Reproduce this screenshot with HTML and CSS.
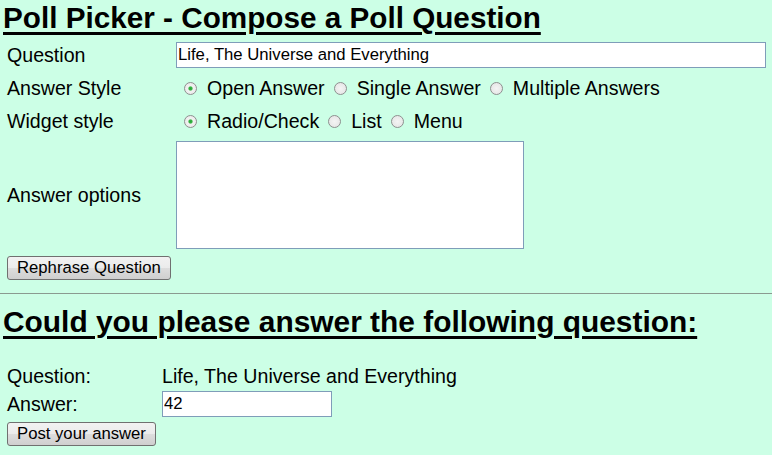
FILE: index.html
```html
<!DOCTYPE html>
<html>
<head>
<meta charset="utf-8">
<title>Poll Picker</title>
<link rel="stylesheet" href="styles.css">
</head>
<body>
<h1 class="title">Poll Picker - Compose a Poll Question</h1>
<form class="compose">
  <div class="label">Question</div>
  <div class="field"><input class="text-in" type="text" value="Life, The Universe and Everything"></div>
  <div class="label">Answer Style</div>
  <div class="field options">
    <label class="opt"><input class="radio" type="radio" name="style" checked> Open Answer</label>
    <label class="opt"><input class="radio" type="radio" name="style"> Single Answer</label>
    <label class="opt"><input class="radio" type="radio" name="style"> Multiple Answers</label>
  </div>
  <div class="label">Widget style</div>
  <div class="field options">
    <label class="opt"><input class="radio" type="radio" name="widget" checked> Radio/Check</label>
    <label class="opt"><input class="radio" type="radio" name="widget"> List</label>
    <label class="opt"><input class="radio" type="radio" name="widget"> Menu</label>
  </div>
  <div class="label">Answer options</div>
  <div class="field"><textarea class="area"></textarea></div>
  <div class="actions"><button class="btn" type="button">Rephrase Question</button></div>
</form>
<hr class="rule">
<h1 class="title second">Could you please answer the following question:</h1>
<form class="answer">
  <div class="label">Question:</div>
  <div class="value">Life, The Universe and Everything</div>
  <div class="label">Answer:</div>
  <div class="value"><input class="text-in small" type="text" value="42"></div>
  <div class="actions"><button class="btn" type="button">Post your answer</button></div>
</form>
</body>
</html>
```
FILE: styles.css
```css
html, body {
  background: #ccffe6;
}
body {
  margin: 0;
  padding: 0 3px;
  font-family: "Liberation Sans", Arial, sans-serif;
  color: #000;
  font-size: 19.6px;
}
.title {
  font-size: 29.7px;
  font-weight: bold;
  margin: 0;
  line-height: 36px;
  text-decoration: underline;
  text-decoration-thickness: 3px;
  text-underline-offset: 4px;
}
.compose {
  display: grid;
  grid-template-columns: 173px 1fr;
  grid-template-rows: 32px 34px 33px 114px 30px;
  align-items: center;
  margin-top: 3px;
}
.label {
  padding-left: 4px;
}
.text-in {
  box-sizing: border-box;
  width: 590px;
  height: 26px;
  border: 1px solid #7f9db9;
  background: #fff;
  font-family: "Liberation Sans", Arial, sans-serif;
  font-size: 16.7px;
  padding: 0 1px;
  margin: 0;
  outline: none;
}
.options {
  display: flex;
  align-items: center;
  gap: 9px;
  padding-left: 8px;
}
.opt {
  display: flex;
  align-items: center;
  gap: 10px;
}
.radio {
  appearance: none;
  -webkit-appearance: none;
  width: 13px;
  height: 13px;
  margin: 0;
  border: 1px solid #8e8f8f;
  border-radius: 50%;
  background: radial-gradient(circle at 50% 50%, #f4f4f4 0, #e2e2e2 100%);
  box-sizing: border-box;
}
.radio:checked {
  background: radial-gradient(circle at 50% 50%, #2aa33a 0, #36b543 1.6px, #f2f2f2 2.6px, #e6e6e6 100%);
}
.area {
  box-sizing: border-box;
  width: 348px;
  height: 108px;
  border: 1px solid #7f9db9;
  background: #fff;
  margin: 0;
  resize: none;
  display: block;
}
.actions {
  grid-column: 1 / -1;
  padding-left: 4px;
}
.btn {
  font-family: "Liberation Sans", Arial, sans-serif;
  font-size: 16.7px;
  height: 24px;
  padding: 0 9px;
  border: 1px solid #707070;
  border-radius: 3px;
  background: linear-gradient(#f2f2f2 0, #ebebeb 50%, #dddddd 51%, #cfcfcf 100%);
  color: #000;
  margin: 0;
}
.rule {
  border: 0;
  border-top: 1px solid #8a9a90;
  margin: 11px -3px 0;
  height: 0;
}
.second {
  font-size: 29.9px;
  margin-top: 10px;
}
.answer {
  display: grid;
  grid-template-columns: 159px 1fr;
  grid-template-rows: 28px 28px 31px;
  align-items: center;
  margin-top: 22px;
}
.small {
  width: 170px;
}
```
